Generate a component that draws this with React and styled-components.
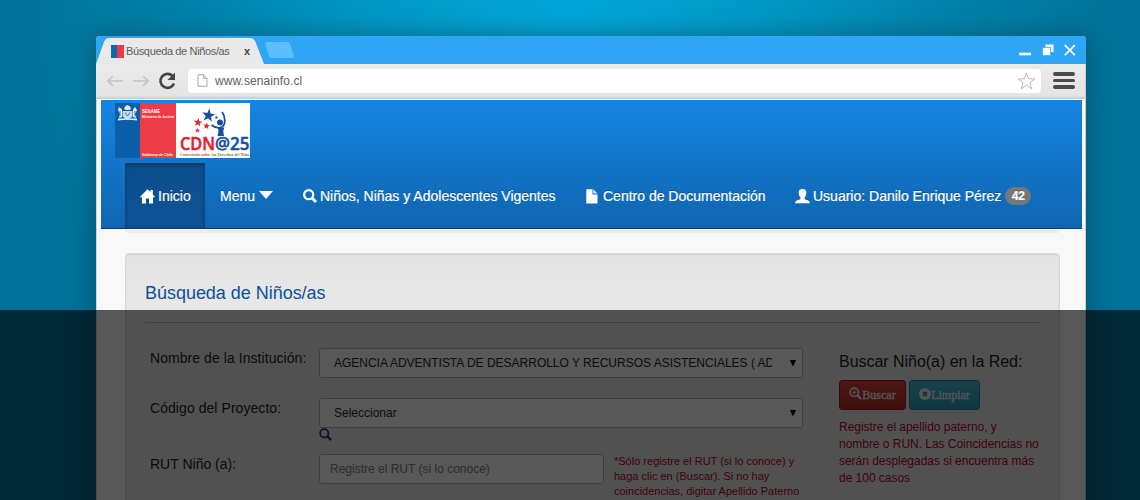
import React from 'react';
import styled, { createGlobalStyle } from 'styled-components';

const Global = createGlobalStyle`
  * { box-sizing: border-box; }
  body { margin: 0; font-family: "Liberation Sans", Arial, sans-serif; overflow: hidden; }
`;

const Stage = styled.div`
  position: relative;
  width: 1140px;
  height: 500px;
  overflow: hidden;
  padding: 36px 54px 0 96px;
  background: radial-gradient(ellipse 540px 480px at 570px 20px, #00a7d8 0%, #0099c6 35%, #0083ac 70%, #007299 100%);
`;

const Shade = styled.div`
  position: absolute;
  inset: 310px 0 0 0;
  background: rgba(0, 0, 0, 0.65);
`;

const Window = styled.div`
  width: 990px;
  height: 520px;
  border-radius: 4px 4px 0 0;
  background: #f8f8f8;
  box-shadow: 0 0 26px rgba(20, 50, 60, 0.5);
  border-right: 1px solid #c9cdd0;
`;

const TitleBar = styled.div`
  display: flex;
  height: 28px;
  width: 990px;
  background: #2ea5f5;
  border-radius: 4px 4px 0 0;
`;

const Tab = styled.div`
  position: relative;
  display: flex;
  align-items: center;
  width: 168px;
  height: 28px;
  padding: 2px 0 0 15px;
  font-size: 11px;
  color: #5c5c5c;
`;

const TabShape = styled.svg`
  position: absolute;
  left: 0;
  top: 0;
`;

const Favicon = styled.span`
  position: relative;
  width: 13px;
  height: 13px;
  margin-right: 2px;
  background: linear-gradient(90deg, #1067b1 45%, #ee3a43 45%);
`;

const TabTitle = styled.span`
  position: relative;
  width: 118px;
  letter-spacing: ${(p) => p.$ls}px;
`;

const TabClose = styled.b`
  position: relative;
  color: #444;
`;

const NewTab = styled.span`
  width: 25px;
  height: 16px;
  margin: 6px 0 0 3px;
  border-radius: 2px;
  background: #5cbdff;
  transform: skewX(17deg);
`;

const WindowControls = styled.svg`
  margin-left: auto;
`;

const Toolbar = styled.div`
  display: flex;
  align-items: center;
  width: 989px;
  height: 36px;
  padding: 0 10px 2px 10px;
  border-bottom: 1px solid #fff;
  background: linear-gradient(#ebebeb, #e4e4e4 32px, #cfcfcf 34px);
`;

const NavIcons = styled.svg`
  flex: none;
  margin-right: 10px;
`;

const Address = styled.div`
  display: flex;
  align-items: center;
  width: 853px;
  height: 24px;
  padding: 0 5px 0 9px;
  border-radius: 4px;
  background: #fff;
  color: #606060;
  font-size: 12px;
  letter-spacing: ${(p) => p.$ls}px;
  span { flex: 1; padding-left: 7px; }
`;

const Burger = styled.div`
  display: flex;
  flex-direction: column;
  gap: 3px;
  margin-left: 12px;
  i { width: 22px; height: 3.5px; border-radius: 2px; background: #4b4b4b; }
`;

const Page = styled.div`
  display: flex;
  flex-direction: column;
  height: 430px;
  width: 989px;
  border: solid #d4d4d4;
  border-width: 0 0 0 1px;
`;

const Header = styled.header`
  display: flex;
  flex-direction: column;
  width: 981px;
  height: 129px;
  margin: 0 0 0 4px;
  padding: 3px 0 0 14px;
  background: linear-gradient(#1585e3, #0f65b0);
  border-bottom: 1px solid #0a3a8c;
`;

const Logo = styled.svg`
  display: block;
  flex: none;
`;

const Nav = styled.nav`
  display: flex;
  height: 65px;
  margin: 5px 0 0 10px;
`;

const NavItem = styled.a`
  display: flex;
  align-items: center;
  flex: none;
  width: ${(p) => p.$w}px;
  height: 65px;
  padding: 1px 0 0 15px;
  color: #fff;
  font-size: 14px;
  letter-spacing: ${(p) => p.$ls || 0}px;
  white-space: nowrap;
  text-shadow: 0 -1px 0 rgba(0, 0, 0, 0.25);
  -webkit-text-stroke: 0.2px #fff;
  ${(p) => p.$active && 'background: linear-gradient(#0d4f8d, #0c5396); box-shadow: inset 0 2px 5px rgba(0,0,0,.3);'}
  svg { flex: none; margin-right: ${(p) => p.$gap ?? 3}px; }
`;

const Caret = styled.svg`
  margin: -3px 0 0 4px;
`;

const Badge = styled.span`
  width: 26px;
  height: 18px;
  margin-left: 4px;
  border-radius: 9px;
  background: #777;
  font-size: 12px;
  font-weight: bold;
  line-height: 18px;
  text-align: center;
`;

const Strip = styled.div`
  width: 935px;
  height: 3px;
  margin: 1px 0 0 28px;
  border-radius: 0 0 4px 4px;
  background: #ececec;
`;

const Panel = styled.section`
  width: 935px;
  height: 280px;
  margin: 20px 0 0 28px;
  padding: 0 19px;
  border: 1px solid #d6d6d6;
  border-radius: 4px;
  background: linear-gradient(#e4e4e4, #e9e9e9 60px);
  box-shadow: inset 0 1px 2px rgba(0, 0, 0, 0.08);
`;

const Title = styled.h1`
  height: 69px;
  margin: 0;
  padding-top: 28px;
  border-bottom: 1px solid #b4b4b4;
  color: #0b509f;
  font-size: 18px;
  line-height: 22px;
  font-weight: normal;
  letter-spacing: ${(p) => p.$ls}px;
`;

const Columns = styled.div`
  display: flex;
`;

const Form = styled.div`
  width: 694px;
  padding: 25px 0 0 5px;
`;

const Row = styled.div`
  display: flex;
  height: ${(p) => p.$h}px;
`;

const Label = styled.label`
  width: 169px;
  padding-top: 1px;
  color: #222;
  font-size: 14px;
  line-height: 18px;
  letter-spacing: ${(p) => p.$ls}px;
`;

const Field = styled.div`
  display: flex;
  align-items: center;
  width: ${(p) => p.$w}px;
  height: 30px;
  padding: 0 5px 0 ${(p) => p.$pad}px;
  border: 1px solid #b2b2b2;
  border-radius: 3px;
  background: #fbfbfb;
  color: ${(p) => p.$color || '#2c2c2c'};
  font-size: 12px;
  letter-spacing: ${(p) => p.$ls}px;
`;

const Value = styled.span`
  width: 438px;
  margin-right: auto;
  overflow: hidden;
  white-space: nowrap;
`;

const SelectColumn = styled.div`
  display: flex;
  flex-direction: column;
`;

const Hint = styled.p`
  margin: ${(p) => p.$m};
  color: #b8002e;
  font-size: ${(p) => p.$size}px;
  line-height: ${(p) => p.$lh}px;
  letter-spacing: ${(p) => p.$ls}px;
  white-space: nowrap;
`;

const Side = styled.aside`
  padding-top: 29px;
`;

const SideTitle = styled.h2`
  margin: 0;
  color: #222;
  font-size: 16px;
  line-height: 20px;
  font-weight: normal;
  letter-spacing: ${(p) => p.$ls}px;
`;

const Buttons = styled.div`
  display: flex;
  gap: 3px;
  margin-top: 8px;
`;

const Button = styled.button`
  display: flex;
  align-items: center;
  justify-content: center;
  width: ${(p) => p.$w}px;
  height: 30px;
  padding: 0;
  border: 1px solid ${(p) => p.$edge};
  border-radius: 3px;
  background: ${(p) => p.$bg};
  color: #f4f4f4;
  font: 12px "Liberation Serif", serif;
  -webkit-text-stroke: 0.3px #f4f4f4;
  svg { margin-bottom: 2px; }
  span { padding-top: 2px; }
`;

const HomeIcon = () => (
  <svg width="15" height="15" viewBox="0 0 15 15" fill="#fff"><path d="M7.5 0.2 10.400 3V1H12.800V5.200L15.200 8.200H13V14.500H9V9.500H6V14.500H2V8.200H-.2Z" /></svg>
);
const SearchIcon = ({ size = 14, color = '#fff', w = 2.3, children }) => (
  <svg width={size} height={size} viewBox="0 0 14 14" fill="none" stroke={color}><circle cx="5.7" cy="5.7" r="4.5" strokeWidth={w} /><path d="M9 9 13 13" strokeWidth={w + 0.5} />{children}</svg>
);
const FileIcon = () => (
  <svg width="12" height="15" viewBox="0 0 12 15"><path d="M.3.2H6.500V5.500H11.500V14.600H.3Z" fill="#fff" /><path d="M7.300.2 11.500 4.600H7.300Z" fill="#dfe6f7" /></svg>
);
const UserIcon = () => (
  <svg width="15" height="15" viewBox="0 0 15 15" fill="#fff"><path d="M7.500 0C10.300 0 11.400 1.500 11.300 4 11.200 6.200 10.400 7.600 9.500 8.600V10C10.500 11 15 11.200 15 14.300H0C0 11.200 4.500 11 5.500 10V8.600C4.600 7.600 3.800 6.200 3.700 4 3.600 1.500 4.700 0 7.500 0Z" /></svg>
);
const Arrow = () => (
  <svg width="8" height="8" viewBox="0 0 8 8"><path d="M.8 1H7.200L4 7.500Z" fill="#000" /></svg>
);

const star = (cx, cy, r) =>
  Array.from({ length: 10 }, (_, i) => {
    const a = -Math.PI / 2 + (i * Math.PI) / 5 + 0.15;
    const q = i % 2 ? r * 0.4 : r;
    return `${cx + q * Math.cos(a)},${cy + q * Math.sin(a)}`;
  }).join(' ');

const Brand = () => (
  <Logo width="135" height="55" viewBox="0 0 135 55">
    <rect width="25" height="55" fill="#0b5ea8" />
    <rect x="25" width="36" height="55" fill="#ee3b46" />
    <rect x="61" width="74" height="55" fill="#fff" />
    <g fill="#e9f1fa">
      <path d="M9 6 10 3.500 12.500 2 15 3.500 16 6 14 7H11Z" />
      <path d="M7.500 8H17.500V13Q16 16 12.500 16.500 9 16 7.500 13Z" opacity=".85" />
      <path d="M3 7 4 4 7 6.500V14L4 15 5 11ZM22 7 20 4 18 6.500V14L21 15 20 11Z" />
      <path d="M3 15.500H22V17.500Q12.500 15.800 3 17.500Z" />
    </g>
    <path d="M10 9.500 12.500 13 15 9.500M5 8V13M20 8V13" stroke="#2568a9" strokeWidth=".9" fill="none" />
    <g fill="#fff" fontFamily="Liberation Sans, sans-serif" fontWeight="bold">
      <text x="27" y="9.800" fontSize="4.800" textLength="18" lengthAdjust="spacingAndGlyphs">SENAME</text>
      <text x="27" y="14.500" fontSize="3.600" textLength="32" lengthAdjust="spacingAndGlyphs">Ministerio de Justicia</text>
      <text x="27" y="53" fontSize="4.300" textLength="31" lengthAdjust="spacingAndGlyphs">Gobierno de Chile</text>
    </g>
    <g fill="#e3262f">
      <polygon points={star(83, 19.5, 4.6)} />
      <polygon points={star(91.5, 23, 3.8)} />
      <polygon points={star(82.5, 27.5, 2.8)} />
    </g>
    <g fill="#174f9f">
      <polygon points={star(93.5, 12.5, 7)} />
      <polygon points={star(101.5, 14.5, 2)} />
      <circle cx="105" cy="19.5" r="3" />
    </g>
    <path d="M96.500 22Q101 25.500 105 24.800 110 23.500 109.800 17 109.500 12 107 9" stroke="#174f9f" strokeWidth="1.800" fill="none" />
    <path d="M103 24.500H109.500L108.200 28 109 33H102.500L103.500 29Z" fill="#174f9f" />
    <g fontFamily="Open Sans, sans-serif" fontSize="18" fontWeight="600" strokeWidth=".5">
      <text x="65" y="47" fill="#e3202c" stroke="#e3202c" textLength="35" lengthAdjust="spacingAndGlyphs">CDN</text>
      <text x="100" y="45.500" fontSize="16" fill="#174f9f" stroke="#174f9f" textLength="15" lengthAdjust="spacingAndGlyphs">@</text>
      <text x="115" y="47" fill="#174f9f" stroke="#174f9f" textLength="19.500" lengthAdjust="spacingAndGlyphs">25</text>
    </g>
    <text x="65" y="53.300" fontFamily="Liberation Serif, serif" fontSize="4.400" fill="#222" textLength="69" lengthAdjust="spacingAndGlyphs">Convención sobre los Derechos del Niño</text>
  </Logo>
);

export default function App() {
  return (
    <>
      <Global />
      <Stage>
        <Window>
          <TitleBar>
            <Tab>
              <TabShape width="172" height="28"><path d="M0 28 8 6Q9.500 2 13 2H154Q158 2 159.500 6L168 28Z" fill="#e9e9e9" /></TabShape>
              <Favicon />
              <TabTitle $ls={-0.36}>Búsqueda de Niños/as</TabTitle>
              <TabClose>x</TabClose>
            </Tab>
            <NewTab />
            <WindowControls width="70" height="28" viewBox="0 0 70 28">
              <path d="M3 18H15" stroke="#fff" strokeWidth="2.600" />
              <path d="M29.500 8.500H37.500V16H35V11H29.500Z" fill="#fff" />
              <rect x="26.500" y="11.500" width="8" height="8" fill="#fff" stroke="#2ea5f5" strokeWidth=".6" />
              <path d="m48.800 9.200 10 10m0-10-10 10" stroke="#fff" strokeWidth="1.800" />
            </WindowControls>
          </TitleBar>
          <Toolbar>
            <NavIcons width="72" height="20" viewBox="0 0 72 20" fill="none">
              <path d="M17 10H2M7 5 2 10 7 15M27 10H42M37 5 42 10 37 15" stroke="#c4c4c4" strokeWidth="1.700" />
              <path d="M66.500 5A7 7 0 1 0 68 12.500" stroke="#444" strokeWidth="2.600" />
              <path d="M69 1.500V9H61.500Z" fill="#444" />
            </NavIcons>
            <Address $ls={0.08}>
              <svg width="11" height="13" viewBox="0 0 12 15"><path d="M.8.8H7L11.200 5V14.200H.8ZM7 .8V5H11.200" fill="none" stroke="#999" /></svg>
              <span>www.senainfo.cl</span>
              <svg width="19" height="18" viewBox="0 0 19 18"><path d="M9.500 1 11.600 6.800 17.800 7 12.900 10.800 14.700 16.800 9.500 13.200 4.300 16.800 6.100 10.800 1.200 7 7.400 6.800Z" fill="none" stroke="#b8b8b8" /></svg>
            </Address>
            <Burger><i /><i /><i /></Burger>
          </Toolbar>
          <Page>
            <Header>
              <Brand />
              <Nav>
                <NavItem $w={80} $active><HomeIcon />Inicio</NavItem>
                <NavItem $w={83}>Menu<Caret width="14" height="8" viewBox="0 0 14 8"><path d="M0 0H14L7 8Z" fill="#fff" /></Caret></NavItem>
                <NavItem $w={283}><SearchIcon />Niños, Niñas y Adolescentes Vigentes</NavItem>
                <NavItem $w={209} $gap={5}><FileIcon />Centro de Documentación</NavItem>
                <NavItem $w={260}><UserIcon />Usuario: Danilo Enrique Pérez<Badge>42</Badge></NavItem>
              </Nav>
            </Header>
            <Strip />
            <Panel>
              <Title $ls={-0.03}>Búsqueda de Niños/as</Title>
              <Columns>
                <Form>
                  <Row $h={50}>
                    <Label $ls={0.06}>Nombre de la Institución:</Label>
                    <Field $w={484} $pad={14} $ls={-0.01}><Value>AGENCIA ADVENTISTA DE DESARROLLO Y RECURSOS ASISTENCIALES ( ADRA )</Value><Arrow /></Field>
                  </Row>
                  <Row $h={56}>
                    <Label $ls={0.06}>Código del Proyecto:</Label>
                    <SelectColumn>
                      <Field $w={484} $pad={14} $ls={0}><Value>Seleccionar</Value><Arrow /></Field>
                      <SearchIcon size={13} color="#17466f" w={2} />
                    </SelectColumn>
                  </Row>
                  <Row $h={60}>
                    <Label $ls={0}>RUT Niño (a):</Label>
                    <Field $w={285} $pad={10} $ls={0} $color="#808080">Registre el RUT (si lo conoce)</Field>
                    <Hint $m="0 0 0 10px" $size={11} $lh={15} $ls={0}>*Sólo registre el RUT (si lo conoce) y<br />haga clic en (Buscar). Si no hay<br />coincidencias, digitar Apellido Paterno</Hint>
                  </Row>
                </Form>
                <Side>
                  <SideTitle $ls={-0.03}>Buscar Niño(a) en la Red:</SideTitle>
                  <Buttons>
                    <Button $w={67} $edge="#a01414" $bg="linear-gradient(#d9433f,#b62a27)"><SearchIcon size={13} color="#f4f4f4" w={1.8}><path d="M3.500 5.700H8M5.700 3.500V8" strokeWidth="1.200" /></SearchIcon><span>Buscar</span></Button>
                    <Button $w={71} $edge="#1b86a5" $bg="linear-gradient(#4db8d6,#2c9dbd)">
                      <svg width="12" height="12" viewBox="0 0 12 12"><circle cx="6" cy="6" r="6" fill="#f4f4f4" /><path d="m4 4 4 4m0-4-4 4" stroke="#2d98b7" strokeWidth="1.800" /></svg><span>Limpiar</span>
                    </Button>
                  </Buttons>
                  <Hint $m="9px 0 0" $size={12} $lh={17} $ls={-0.03}>Registre el apellido paterno, y<br />nombre o RUN. Las Coincidencias no<br />serán desplegadas si encuentra más<br />de 100 casos</Hint>
                </Side>
              </Columns>
            </Panel>
          </Page>
        </Window>
        <Shade />
      </Stage>
    </>
  );
}
